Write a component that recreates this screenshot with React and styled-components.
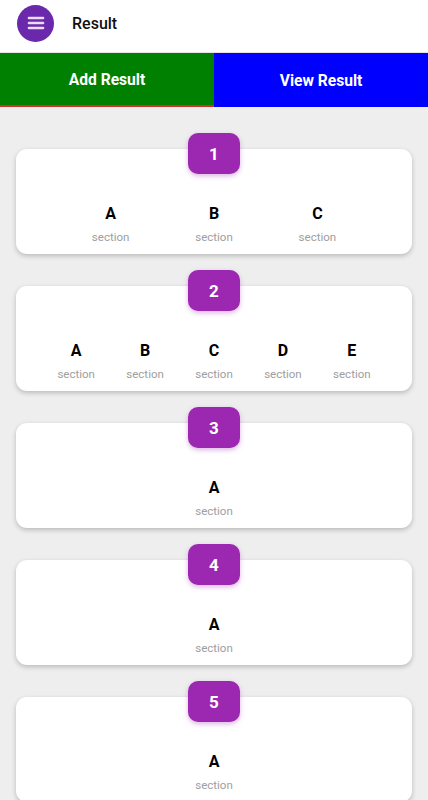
import React from "react";
import styled, { createGlobalStyle } from "styled-components";

const Global = createGlobalStyle`
  html, body { margin: 0; padding: 0; background: #eeeeee; }
  body { font-family: Roboto, "Noto Sans", sans-serif; }
  * { box-sizing: border-box; }
`;

const Page = styled.div`
  width: 428px;
  min-height: 800px;
  background: #eeeeee;
`;

const Header = styled.header`
  height: 53px;
  background: #ffffff;
  border-bottom: 1px solid #e4e4e4;
  display: flex;
  align-items: center;
  padding-left: 17px;
  gap: 18px;
`;

const MenuButton = styled.div`
  width: 37px;
  height: 37px;
  border-radius: 50%;
  background: #6a28ad;
  display: flex;
  align-items: center;
  justify-content: center;
  margin-top: -6px;
`;

const Title = styled.div`
  font-size: 16px;
  font-weight: 500;
  color: #111;
  margin-top: -6px;
`;

const Tabs = styled.nav`
  display: flex;
  height: 54px;
`;

const Tab = styled.div`
  flex: 1;
  display: flex;
  align-items: center;
  justify-content: center;
  background: ${(p) => p.$bg};
  color: #fff;
  font-size: 15.6px;
  font-weight: 700;
  border-bottom: 2px solid ${(p) => (p.$active ? "#d32f2f" : p.$bg)};
  padding-top: ${(p) => (p.$active ? "2px" : "4px")};
`;

const List = styled.main`
  padding: 26px 16px 0;
  display: flex;
  flex-direction: column;
  gap: 16px;
`;

const Group = styled.section`
  padding-top: 16px;
`;

const Card = styled.div`
  position: relative;
  background: #fff;
  border-radius: 11px;
  box-shadow: 0 2px 5px rgba(0, 0, 0, 0.22);
  padding: 55px 10px 9px;
  display: flex;
  justify-content: space-evenly;
`;

const Badge = styled.div`
  position: absolute;
  top: -16px;
  left: 50%;
  transform: translateX(-50%);
  width: 52px;
  height: 41px;
  border-radius: 10px;
  background: #9c27b0;
  color: #fff;
  font-size: 17px;
  font-weight: 700;
  display: flex;
  align-items: center;
  justify-content: center;
  box-shadow: 0 2px 5px rgba(156, 39, 176, 0.35);
`;

const Item = styled.div`
  display: flex;
  flex-direction: column;
  align-items: center;
`;

const Letter = styled.div`
  font-size: 16px;
  line-height: 20px;
  font-weight: 700;
  color: #000;
`;

const Sub = styled.div`
  font-size: 11.5px;
  line-height: 16px;
  color: #9e9e9e;
  margin-top: 5px;
`;

const Hamburger = () => (
  <svg width="18" height="16" viewBox="0 0 18 16">
    <g stroke="#eadcf7" strokeWidth="2.6" strokeLinecap="round">
      <line x1="2" y1="3" x2="16" y2="3" />
      <line x1="2" y1="8" x2="16" y2="8" />
      <line x1="2" y1="13" x2="16" y2="13" />
    </g>
  </svg>
);

const data = [
  ["A", "B", "C"],
  ["A", "B", "C", "D", "E"],
  ["A"],
  ["A"],
  ["A"],
];

export default function App() {
  return (
    <Page>
      <Global />
      <Header>
        <MenuButton>
          <Hamburger />
        </MenuButton>
        <Title>Result</Title>
      </Header>
      <Tabs>
        <Tab $bg="#008000" $active>Add Result</Tab>
        <Tab $bg="#0000ff">View Result</Tab>
      </Tabs>
      <List>
        {data.map((sections, i) => (
          <Group key={i}>
            <Card>
              <Badge>{i + 1}</Badge>
              {sections.map((s) => (
                <Item key={s}>
                  <Letter>{s}</Letter>
                  <Sub>section</Sub>
                </Item>
              ))}
            </Card>
          </Group>
        ))}
      </List>
    </Page>
  );
}
